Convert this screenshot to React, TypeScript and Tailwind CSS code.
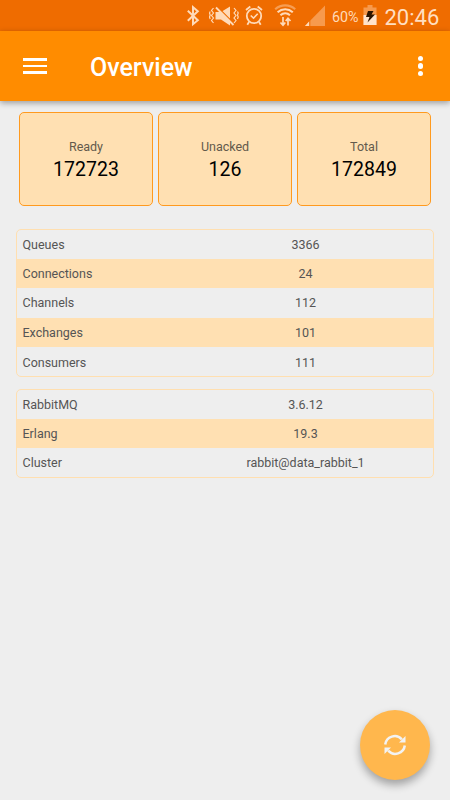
import type { ReactNode } from "react";

type Row = { label: string; value: string };

const STATS: Row[] = [
  { label: "Ready", value: "172723" },
  { label: "Unacked", value: "126" },
  { label: "Total", value: "172849" },
];

const OBJECTS: Row[] = [
  { label: "Queues", value: "3366" },
  { label: "Connections", value: "24" },
  { label: "Channels", value: "112" },
  { label: "Exchanges", value: "101" },
  { label: "Consumers", value: "111" },
];

const VERSIONS: Row[] = [
  { label: "RabbitMQ", value: "3.6.12" },
  { label: "Erlang", value: "19.3" },
  { label: "Cluster", value: "rabbit@data_rabbit_1" },
];

function StatusIcon({ width, className, children }: { width: number; className: string; children: ReactNode }) {
  return (
    <svg
      width={width}
      height={31}
      viewBox={`0 0 ${width} 31`}
      fill="none"
      stroke="#ffdab8"
      className={`shrink-0 ${className}`}
      aria-hidden="true"
    >
      {children}
    </svg>
  );
}

function StatusBar() {
  return (
    <div className="flex h-[31px] items-center bg-[#ef6c00] text-[#ffdab8]">
      {/* bluetooth */}
      <StatusIcon width={14} className="ml-[186px]">
        <path d="M1.8 10.8 11.8 20.2 7 24.2V7.2l4.8 4L1.8 20.8" strokeWidth="2" />
      </StatusIcon>
      {/* muted, vibrating */}
      <StatusIcon width={30} className="ml-[9px]">
        <path d="M6.5 12h5.5L21 6.5v19L12 19.500H6.500z" fill="#ffdab8" stroke="none" />
        <path d="M8.500 7 25 23.500" stroke="#ef6c00" strokeWidth="1.300" />
        <path d="M7 7.500 24.500 25" strokeWidth="1.800" />
        <path d="m4.500 8-2 2.500 2 2.500-2 2.500 2 2.500-2 2.500 2 2.500M1.200 11.500l-.7 1.500.7 2-.7 2 .7 2M25 8l2 2.500-2 2.500 2 2.500-2 2.500 2 2.500-2 2.500M28.500 11.500l.7 1.500-.7 2 .7 2-.7 2" strokeWidth="1.200" />
      </StatusIcon>
      {/* alarm */}
      <StatusIcon width={18} className="ml-[6px]">
        <circle cx="9" cy="16" r="7.2" strokeWidth="1.8" />
        <path d="m1 10 4.3-3.5M17 10l-4.3-3.5M4 22l-1.7 2.7M14 22l1.7 2.7" strokeWidth="1.8" />
        <path d="m5.7 15.5 2.8 2.7 4.2-4.5" strokeWidth="1.6" />
      </StatusIcon>
      {/* wifi with traffic arrows */}
      <StatusIcon width={22} className="ml-[11px]">
        <path d="M1.2 9.2c5.8-5.2 14.2-5.2 20 0" strokeWidth="2.2" opacity=".45" />
        <path d="M3.6 12.2c4.5-4 10.7-4 15.2 0M6.4 15.2c2.8-2.5 6.8-2.5 9.6 0" strokeWidth="2.1" />
        <path d="M9 17v8M6.500 22.500 9 25.300l2.300-2.800M14 25.500v-7.500M11.700 21l2.300-2.800 2.500 2.800" strokeWidth="1.700" />
      </StatusIcon>
      {/* mobile signal */}
      <StatusIcon width={20} className="ml-[9px]">
        <path d="M20 5.5V26H0z" fill="#f79a4d" stroke="none" />
        <path d="M4.5 21v5H0z" fill="#ffdab8" stroke="none" />
        <path d="M4.8 20.5V26" stroke="#ef6c00" strokeWidth="1" />
      </StatusIcon>
      <span className="ml-[7px] w-[31px] pt-[3px] text-[14.300px] leading-[28px]">60%</span>
      {/* charging battery */}
      <StatusIcon width={14} className="">
        <path d="M4.500 5h5v2.500h4V25H.500V7.500h4z" fill="#f79a4d" stroke="none" />
        <path d="M.500 15h13v10H.500z" fill="#ffe3cc" stroke="none" />
        <path d="M5 11h5.500l-2 3.500H12L4.500 22.500l2-5.500H3z" fill="#2b1400" stroke="none" />
      </StatusIcon>
      <span className="ml-[7.500px] pt-[4px] text-[22px] leading-[27px] text-[#ffdfc2]">20:46</span>
    </div>
  );
}

function Toolbar() {
  return (
    <header className="relative flex h-[70px] items-center bg-[#ff8c00] pr-[27px] pl-[23px] text-white shadow-[0_2px_6px_rgba(0,0,0,0.35)]">
      <button type="button" aria-label="Open menu" className="flex w-[24px] flex-col gap-[4px]">
        <span className="h-[2.500px] bg-white" />
        <span className="h-[2.500px] bg-white" />
        <span className="h-[2.500px] bg-white" />
      </button>
      <h1 className="ml-[43px] flex-1 pt-[4px] text-[25px] leading-[30px] font-medium">Overview</h1>
      <button type="button" aria-label="More options" className="flex flex-col gap-[2px]">
        <span className="size-[5.500px] rounded-full bg-white" />
        <span className="size-[5.500px] rounded-full bg-white" />
        <span className="size-[5.500px] rounded-full bg-white" />
      </button>
    </header>
  );
}

function StatCard({ label, value }: Row) {
  return (
    <div className="flex h-[94px] w-[134px] flex-col items-center rounded-[5px] border border-[#ff9a1f] bg-[#ffe0b2] pt-[25px]">
      <span className="text-[12.500px] leading-[18px] text-[#635a4c]">{label}</span>
      <span className="mt-[2px] text-[19.500px] leading-[24px] text-black">{value}</span>
    </div>
  );
}

function InfoTable({ rows, className }: { rows: Row[]; className: string }) {
  return (
    <div className={`overflow-hidden rounded-[5px] border border-[#ffdfb0] ${className}`}>
      {rows.map((row) => (
        <div
          key={row.label}
          className="flex h-[29.600px] items-center pt-[1.500px] text-[12.500px] text-[#555] first:h-[28.600px] even:bg-[#ffe0b2]"
        >
          <span className="w-[161px] pl-[5.500px]">{row.label}</span>
          <span className="flex-1 text-center">{row.value}</span>
        </div>
      ))}
    </div>
  );
}

export default function App() {
  return (
    <div className="relative h-[800px] w-[450px] overflow-hidden bg-[#eee] font-[Roboto,sans-serif]">
      <StatusBar />
      <Toolbar />
      <main className="px-4 pt-[11px]">
        <div className="flex gap-[5px] pl-[3px]">
          {STATS.map((stat) => (
            <StatCard key={stat.label} {...stat} />
          ))}
        </div>
        <InfoTable rows={OBJECTS} className="mt-[23px] h-[148px]" />
        <InfoTable rows={VERSIONS} className="mt-[12px] h-[89px]" />
      </main>
      <button
        type="button"
        aria-label="Refresh"
        className="absolute right-5 bottom-5 flex size-[70px] items-center justify-center rounded-full bg-[#ffb74d] shadow-[0_5px_9px_rgba(0,0,0,0.32)]"
      >
        <svg width="24" height="24" viewBox="0 0 24 24" fill="none" aria-hidden="true">
          <path d="M2.200 11.500a9.600 9.600 0 0 1 16.600-5.200" stroke="#f3f3f3" strokeWidth="2.500" />
          <path d="M22.500 3v6.500H16z" fill="#f3f3f3" />
          <path d="M21.800 12.500a9.600 9.600 0 0 1-16.600 5.200" stroke="#f3f3f3" strokeWidth="2.500" />
          <path d="M1.500 21v-6.500H8z" fill="#f3f3f3" />
        </svg>
      </button>
    </div>
  );
}
